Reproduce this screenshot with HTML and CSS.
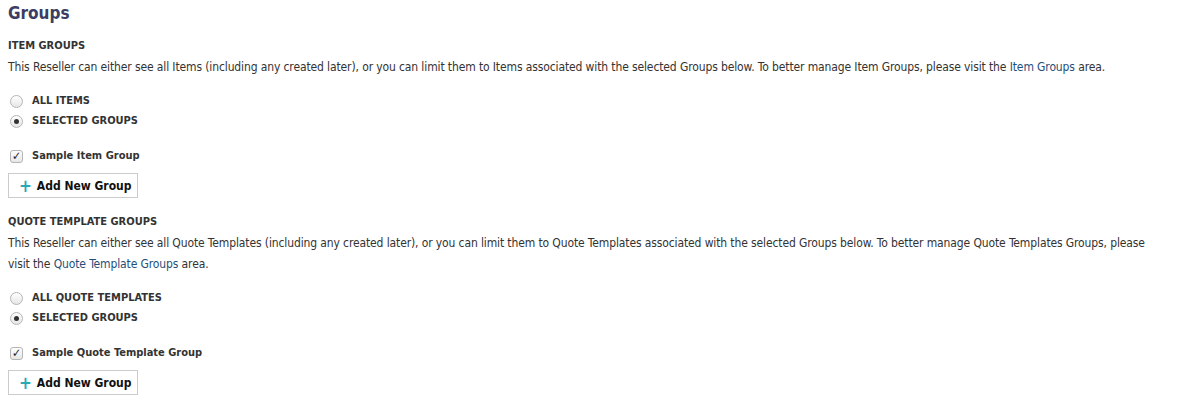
FILE: index.html
```html
<!DOCTYPE html>
<html lang="en">
<head>
    <meta charset="UTF-8">
    <title>Groups</title>
    <link rel="stylesheet" href="styles.css">
</head>
<body>

    <div class="page">
        <h2 class="title">Groups</h2>

        <div class="group">
            <h3 class="group-label">ITEM GROUPS</h3>
            <p class="group-desc">This Reseller can either see all Items (including any created later), or you can limit them to Items associated with the selected Groups below. To better manage Item Groups, please visit the <a href="#">Item Groups</a> area.</p>

            <div class="choices">
                <div class="choice"><span class="radio"></span>ALL ITEMS</div>
                <div class="choice"><span class="radio checked"></span>SELECTED GROUPS</div>
            </div>

            <div class="check"><span class="box">&#10003;</span>Sample Item Group</div>

            <button class="add-btn"><span class="plus">+</span>Add New Group</button>
        </div>

        <div class="group">
            <h3 class="group-label">QUOTE TEMPLATE GROUPS</h3>
            <p class="group-desc">This Reseller can either see all Quote Templates (including any created later), or you can limit them to Quote Templates associated with the selected Groups below. To better manage Quote Templates Groups, please visit the <a href="#">Quote Template Groups</a> area.</p>

            <div class="choices">
                <div class="choice"><span class="radio"></span>ALL QUOTE TEMPLATES</div>
                <div class="choice"><span class="radio checked"></span>SELECTED GROUPS</div>
            </div>

            <div class="check"><span class="box">&#10003;</span>Sample Quote Template Group</div>

            <button class="add-btn"><span class="plus">+</span>Add New Group</button>
        </div>
    </div>

</body>
</html>
```

FILE: styles.css
```css
* {
    margin: 0;
    padding: 0;
    box-sizing: border-box;
}
body {
    background-color: white;
    font-family: "DejaVu Sans Condensed", "DejaVu Sans", sans-serif;
    font-size: 12px;
    color: #333;
}
.page {
    width: 1165px;
    padding: 3px 8px;
}
.title {
    font-size: 17px;
    font-weight: bold;
    color: #3b3d63;
    line-height: 20px;
    margin-bottom: 16px;
}
.group {
    margin-bottom: 17px;
}
.group-label {
    font-size: 11px;
    font-weight: bold;
    color: #333;
    line-height: 14px;
    margin-bottom: 4px;
}
.group-desc {
    line-height: 21px;
    letter-spacing: -0.12px;
    margin-bottom: 16px;
}
.group-desc a {
    color: #1f4f7a;
    text-decoration: none;
}
.choices {
    display: flex;
    flex-direction: column;
    gap: 6px;
    margin-bottom: 21px;
}
.choice,
.check {
    display: flex;
    align-items: center;
    gap: 9px;
    font-size: 11px;
    font-weight: bold;
    line-height: 14px;
    padding-left: 2px;
}
.radio {
    width: 13px;
    height: 13px;
    border-radius: 50%;
    border: 1px solid #b5b5b5;
    background: linear-gradient(#fff, #e6e6e6);
    display: flex;
    align-items: center;
    justify-content: center;
}
.radio.checked::after {
    content: "";
    width: 5px;
    height: 5px;
    border-radius: 50%;
    background: #333;
}
.check {
    margin-bottom: 10px;
}
.box {
    width: 13px;
    height: 13px;
    border-radius: 3px;
    border: 1px solid #b5b5b5;
    background: linear-gradient(#fff, #e6e6e6);
    font-size: 12px;
    line-height: 11px;
    text-align: center;
    color: #222;
}
.add-btn {
    display: flex;
    align-items: center;
    gap: 5px;
    height: 25px;
    padding: 0 5px 0 10px;
    white-space: nowrap;
    background: white;
    border: 1px solid #ccc;
    font-family: inherit;
    font-size: 12px;
    font-weight: bold;
    color: #111;
}
.plus {
    color: #2aa8b5;
    font-size: 17px;
    font-weight: bold;
    line-height: 16px;
}
```
